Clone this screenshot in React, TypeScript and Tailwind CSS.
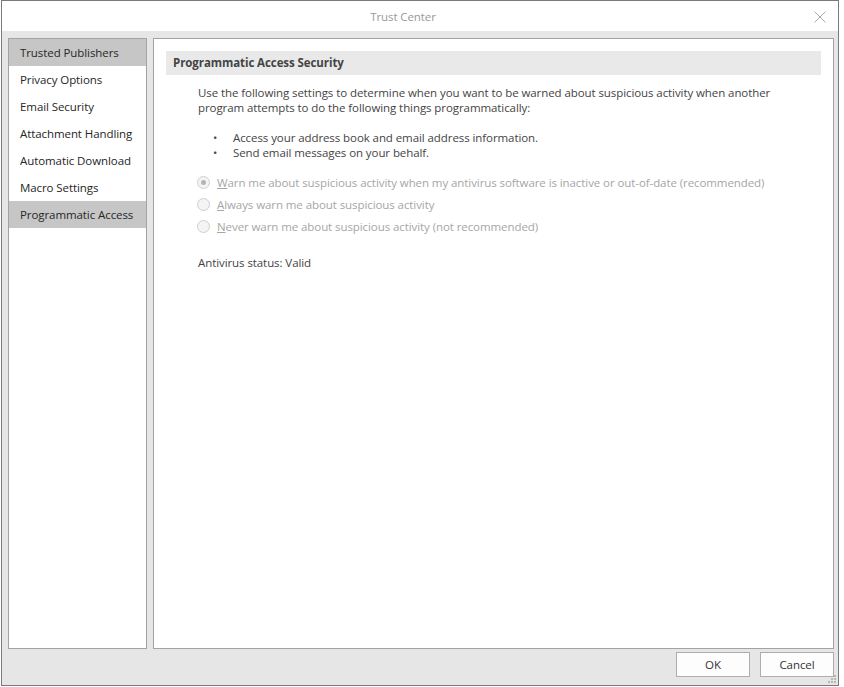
import React from "react";

const navItems = [
  "Trusted Publishers",
  "Privacy Options",
  "Email Security",
  "Attachment Handling",
  "Automatic Download",
  "Macro Settings",
  "Programmatic Access",
];

const Radio: React.FC<{ checked?: boolean }> = ({ checked }) => (
  <span className="w-[13px] h-[13px] rounded-full border border-[#cfcfcf] bg-[#f4f4f4] flex items-center justify-center shrink-0">
    {checked && <span className="w-[5px] h-[5px] rounded-full bg-[#b4b4b4]" />}
  </span>
);

export default function App() {
  return (
    <div
      className="w-[844px] h-[687px] bg-white relative overflow-hidden text-[11.5px] tracking-[-0.08px] text-[#333]"
      style={{ fontFamily: '"Segoe UI", "Open Sans", "Noto Sans", sans-serif' }}
    >
      <div className="ml-[1px] w-[838px] h-[686px] border border-[#7a7a7a] flex flex-col relative">
        {/* title bar */}
        <div className="h-[30px] bg-white flex items-center justify-center relative shrink-0 pr-[34px]">
          <span className="text-[11.5px] text-[#999] mt-[1px]">Trust Center</span>
          <svg
            className="absolute right-[12px] top-[10px]"
            width="12"
            height="12"
            viewBox="0 0 12 12"
          >
            <path d="M0.5 0.5 L11.5 11.5 M11.5 0.5 L0.5 11.5" stroke="#a8a8a8" strokeWidth="1" />
          </svg>
        </div>

        {/* body */}
        <div className="flex-1 bg-[#e6e6e6] flex flex-col pt-[7px] pl-[6px] pr-[4px]">
          <div className="flex gap-[6px] h-[611px]">
            <div className="w-[139px] border border-[#a3a3a3] bg-white flex flex-col">
              {navItems.map((item, i) => (
                <div
                  key={item}
                  className={`h-[27px] flex items-center pl-[11px] text-[#262626] ${
                    i === 0 || i === 6 ? "bg-[#c6c6c6]" : ""
                  }`}
                >
                  {item}
                </div>
              ))}
            </div>

            <div className="flex-1 border border-[#a3a3a3] bg-white pt-[12px] px-[12px]">
              <div className="h-[24px] bg-[#e9e9e9] flex items-center pl-[7px] font-bold text-[#444]">
                Programmatic Access Security
              </div>
              <div className="pl-[32px] text-[#444] leading-[15px]">
                <p className="mt-[10px]">
                  Use the following settings to determine when you want to be warned about suspicious activity when another
                  <br />
                  program attempts to do the following things programmatically:
                </p>
                <ul className="mt-[15px] pl-[15px]">
                  <li className="flex">
                    <span className="w-[20px]">•</span>Access your address book and email address information.
                  </li>
                  <li className="flex">
                    <span className="w-[20px]">•</span>Send email messages on your behalf.
                  </li>
                </ul>
                <div className="mt-[11px] flex flex-col text-[#a6a6a6]">
                  <div className="h-[22px] flex items-center gap-[7px] -ml-[1px]">
                    <Radio checked />
                    <span>
                      <u>W</u>arn me about suspicious activity when my antivirus software is inactive or out-of-date (recommended)
                    </span>
                  </div>
                  <div className="h-[22px] flex items-center gap-[7px] -ml-[1px]">
                    <Radio />
                    <span>
                      <u>A</u>lways warn me about suspicious activity
                    </span>
                  </div>
                  <div className="h-[22px] flex items-center gap-[7px] -ml-[1px]">
                    <Radio />
                    <span>
                      <u>N</u>ever warn me about suspicious activity (not recommended)
                    </span>
                  </div>
                </div>
                <p className="mt-[18px]">Antivirus status: Valid</p>
              </div>
            </div>
          </div>

          <div className="flex justify-end gap-[10px] mt-[3px]">
            <button className="w-[74px] h-[25px] bg-[#fdfdfd] border border-[#adadad] text-[#333]">OK</button>
            <button className="w-[74px] h-[25px] bg-[#fdfdfd] border border-[#adadad] text-[#333]">Cancel</button>
          </div>
        </div>

        {/* resize grip */}
        <svg className="absolute right-[1px] bottom-[1px]" width="10" height="10" viewBox="0 0 10 10">
          <rect x="7" y="1" width="2" height="2" fill="#b8b8b8" />
          <rect x="4" y="4" width="2" height="2" fill="#b8b8b8" />
          <rect x="7" y="4" width="2" height="2" fill="#b8b8b8" />
          <rect x="1" y="7" width="2" height="2" fill="#b8b8b8" />
          <rect x="4" y="7" width="2" height="2" fill="#b8b8b8" />
          <rect x="7" y="7" width="2" height="2" fill="#b8b8b8" />
        </svg>
      </div>
    </div>
  );
}
